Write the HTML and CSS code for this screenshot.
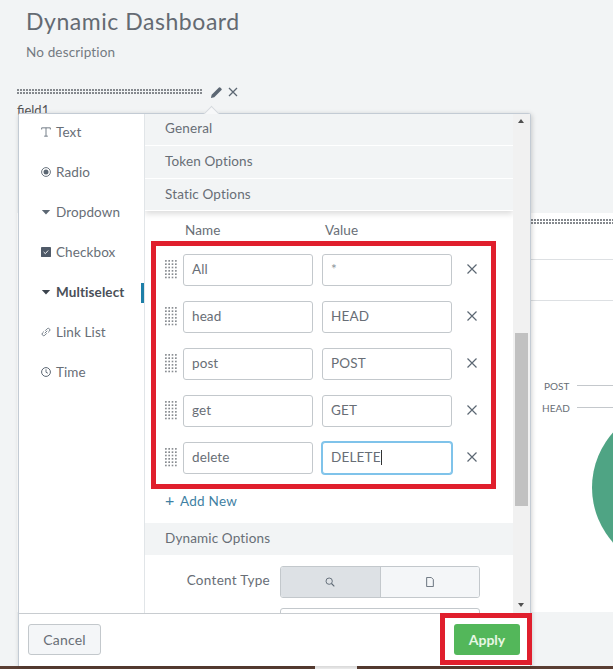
FILE: index.html
```html
<!DOCTYPE html>
<html lang="en">
<head>
<meta charset="utf-8">
<title>Dynamic Dashboard</title>
<link rel="stylesheet" href="styles.css">
</head>
<body>
<div class="page">
  <header class="head">
    <h1 class="title">Dynamic Dashboard</h1>
    <p class="desc">No description</p>
  </header>
  <div class="field-bar">
    <div class="dots dots-field"></div>
    <svg class="pencil" viewBox="0 0 14 14"><path d="M1 13l.8-3.600L9.600 1.600a1 1 0 0 1 1.400 0l1.400 1.400a1 1 0 0 1 0 1.400L4.600 12.200z" fill="#5c6773"/></svg>
    <svg class="field-x" viewBox="0 0 10 10"><path d="M1 1l8 8M9 1l-8 8" stroke="#5c6773" stroke-width="1.300" fill="none"/></svg>
  </div>
  <div class="field-label">field1</div>

  <section class="panel">
    <div class="dots dots-panel"></div>
    <div class="panel-line line-a"></div>
    <div class="panel-line line-b"></div>
    <span class="chart-label label-post">POST</span>
    <span class="chart-rule rule-post"></span>
    <span class="chart-label label-head">HEAD</span>
    <span class="chart-rule rule-head"></span>
    <div class="pie"></div>
  </section>
  <div class="taskbar"><span class="taskbar-tab"></span></div>

  <div class="popover">
    <span class="caret"></span>
    <div class="pop-body">
      <nav class="nav">
        <a class="nav-item"><svg class="ico" viewBox="0 0 12 12"><path d="M.8 3V1h10.400v2M6 1v10M3.800 11h4.400" stroke="#5c6773" stroke-width="1" fill="none"/></svg>Text</a>
        <a class="nav-item"><svg class="ico" viewBox="0 0 12 12"><circle cx="6" cy="6" r="5.300" stroke="#5c6773" stroke-width="1.100" fill="none"/><circle cx="6" cy="6" r="3" fill="#5c6773"/></svg>Radio</a>
        <a class="nav-item"><svg class="ico" viewBox="0 0 12 12"><path d="M1 3.500h10L6 9z" fill="#5c6773"/></svg>Dropdown</a>
        <a class="nav-item"><svg class="ico" viewBox="0 0 12 12"><rect x="0" y="0" width="12" height="12" rx="1" fill="#4f5a68"/><path d="M3.200 6l2 2 3.400-3.800" stroke="#fff" stroke-width="1.100" fill="none"/></svg>Checkbox</a>
        <a class="nav-item is-active"><svg class="ico" viewBox="0 0 12 12"><path d="M1 3.500h10L6 9z" fill="#3c444d"/></svg>Multiselect</a>
        <a class="nav-item"><svg class="ico" viewBox="0 0 12 12"><path d="M4.500 7.500l3-3M5 4.500L7.500 2a2 2 0 0 1 2.800 2.800L8.500 6.500M7 7.500L4.500 10a2 2 0 0 1-2.800-2.800L3.500 5.500" stroke="#5c6773" stroke-width="1" fill="none"/></svg>Link List</a>
        <a class="nav-item"><svg class="ico" viewBox="0 0 12 12"><circle cx="6" cy="6" r="5.300" stroke="#5c6773" stroke-width="1.200" fill="none"/><path d="M6 2.800v3.500l2.300 1.200" stroke="#5c6773" stroke-width="1.100" fill="none"/></svg>Time</a>
      </nav>
      <div class="main">
        <div class="accordion">
          <div class="acc-row">General</div>
          <div class="acc-row">Token Options</div>
          <div class="acc-row">Static Options</div>
        </div>
        <div class="col-heads"><span class="col-name">Name</span><span>Value</span></div>
        <div class="rows">
          <div class="row"><span class="grip"></span><div class="input name">All</div><div class="input val star">*</div><svg class="del" viewBox="0 0 10 10"><path d="M.500.500l9 9M9.500.500l-9 9" stroke="#5c6773" stroke-width="1.200" fill="none"/></svg></div>
          <div class="row"><span class="grip"></span><div class="input name">head</div><div class="input val">HEAD</div><svg class="del" viewBox="0 0 10 10"><path d="M.500.500l9 9M9.500.500l-9 9" stroke="#5c6773" stroke-width="1.200" fill="none"/></svg></div>
          <div class="row"><span class="grip"></span><div class="input name">post</div><div class="input val">POST</div><svg class="del" viewBox="0 0 10 10"><path d="M.500.500l9 9M9.500.500l-9 9" stroke="#5c6773" stroke-width="1.200" fill="none"/></svg></div>
          <div class="row"><span class="grip"></span><div class="input name">get</div><div class="input val">GET</div><svg class="del" viewBox="0 0 10 10"><path d="M.500.500l9 9M9.500.500l-9 9" stroke="#5c6773" stroke-width="1.200" fill="none"/></svg></div>
          <div class="row"><span class="grip"></span><div class="input name">delete</div><div class="input val is-focus">DELETE<span class="cursor"></span></div><svg class="del" viewBox="0 0 10 10"><path d="M.500.500l9 9M9.500.500l-9 9" stroke="#5c6773" stroke-width="1.200" fill="none"/></svg></div>
        </div>
        <a class="add-new"><span class="plus">+</span>Add New</a>
        <div class="acc-row dyn">Dynamic Options</div>
        <div class="ctype">
          <span class="ctype-label">Content Type</span>
          <div class="seg">
            <span class="seg-btn is-on"><svg class="seg-ico" viewBox="0 0 12 12"><circle cx="5" cy="5" r="3.800" stroke="#5c6773" stroke-width="1.100" fill="none"/><path d="M7.800 7.800l3.400 3.400" stroke="#5c6773" stroke-width="1.300"/></svg></span>
            <span class="seg-btn"><svg class="seg-ico" viewBox="0 0 12 12"><path d="M2 .5h5.500l2.500 2.500v8.500H2z" stroke="#5c6773" stroke-width="1.100" fill="none"/></svg></span>
          </div>
        </div>
        <div class="next-input"></div>
      </div>
      <div class="scroll">
        <span class="arrow-up"></span>
        <span class="thumb"></span>
        <span class="arrow-down"></span>
      </div>
    </div>
    <footer class="pop-foot">
      <button class="btn cancel">Cancel</button>
      <button class="btn apply">Apply</button>
    </footer>
  </div>

  <div class="mark mark-rows"></div>
  <div class="mark mark-apply"></div>
</div>
</body>
</html>
```
FILE: styles.css
```css
* { box-sizing: border-box; }
html, body { margin: 0; padding: 0; }
body { font-family: Lato, "Open Sans", sans-serif; color: #686e76; background: #f2f4f5; overflow: hidden; }
.page { position: relative; width: 613px; height: 669px; overflow: hidden; background: #f2f4f5; }

.head { padding: 7px 0 0 26px; height: 84px; }
.title { margin: 0; font-size: 23px; line-height: 28px; font-weight: 400; color: #646a72; letter-spacing: .55px; }
.desc { margin: 9px 0 0; font-size: 13.500px; line-height: 16px; color: #747a82; letter-spacing: .15px; }

.field-bar { display: flex; align-items: center; height: 16px; padding-left: 17px; }
.dots { height: 6px; background-image: radial-gradient(circle at 1px 1px, #85898e .85px, transparent 1px); background-size: 3px 3px; }
.dots-field { width: 186px; }
.pencil { width: 13px; height: 13px; margin-left: 7px; }
.field-x { width: 10px; height: 10px; margin-left: 5px; }
.field-label { padding-left: 17px; font-size: 13px; line-height: 14px; color: #555; height: 110px; margin-top: 3px; }

.panel { position: relative; height: 399px; margin-left: 17px; background: #fff; }
.dots-panel { position: absolute; left: 514px; right: 0; top: 6px; }
.panel-line { position: absolute; left: 514px; right: 0; height: 1px; background: #dde0e3; }
.line-a { top: 46px; }
.line-b { top: 87px; }
.chart-label { position: absolute; font-size: 10px; line-height: 12px; color: #686e76; }
.label-post { left: 527px; top: 167px; }
.label-head { left: 525px; top: 189px; }
.chart-rule { position: absolute; left: 560px; right: 0; height: 1px; background: #c4c8cc; }
.rule-post { top: 172px; }
.rule-head { top: 194px; }
.pie { position: absolute; left: 575px; top: 192px; width: 165px; height: 165px; border-radius: 50%; background: #4fa484; }

.taskbar { position: absolute; left: 0; right: 0; bottom: 0; height: 3px; background: #5a3e33; }
.taskbar-tab { display: block; width: 42px; height: 3px; margin-left: 315px; background: #f4f4f4; }

.popover { position: absolute; left: 18px; top: 113px; width: 513px; height: 553px; background: #fff; border: 1px solid #c3cbd4; border-bottom: 0; border-radius: 3px 3px 0 0; box-shadow: 1px 1px 5px rgba(0,0,0,.18); display: flex; flex-direction: column; }
.caret { position: absolute; left: 187px; top: -6px; width: 11px; height: 11px; background: #f7f8f9; transform: rotate(45deg); border-left: 1px solid #d5dade; border-top: 1px solid #d5dade; }
.pop-body { display: flex; height: 499px; position: relative; overflow: hidden; }
.nav { width: 126px; flex: none; border-right: 1px solid #e1e5e8; background: #fff; }
.nav-item { display: flex; align-items: center; height: 40px; padding: 0 0 4px 22px; font-size: 13.500px; color: #686e76; letter-spacing: .1px; }
.nav-item.is-active { font-weight: 700; color: #4a5058; position: relative; }
.nav-item.is-active::after { content: ""; position: absolute; right: 0; top: 9px; width: 3px; height: 20px; background: #1e7fa8; }
.ico { width: 10px; height: 10px; margin-right: 5px; flex: none; }

.main { width: 368px; flex: none; overflow: hidden; background: #fff; }
.accordion { background: #f2f4f5; box-shadow: 0 3px 6px rgba(0,0,0,.14); position: relative; }
.acc-row { height: 32.33px; padding-left: 20px; line-height: 28px; font-size: 13.500px; color: #686e76; background: #f2f4f5; border-bottom: 1px solid #fff; letter-spacing: .15px; }
.acc-row + .acc-row { line-height: 30px; }
.col-heads { display: flex; height: 43px; padding: 11px 0 0 40px; font-size: 13.500px; line-height: 16px; color: #686e76; letter-spacing: .1px; }
.col-name { width: 140px; }
.rows { display: flex; flex-direction: column; gap: 15px; }
.row { display: flex; align-items: center; height: 32px; padding-left: 20px; }
.grip { width: 12px; height: 20px; margin-right: 6px; background-image: radial-gradient(circle at 1px 1px, #85898e .8px, transparent 1px); background-size: 3.330px 3.330px; }
.input { height: 32px; width: 130px; border: 1px solid #c3c8cc; border-radius: 3px; padding-left: 8px; font-size: 13.500px; line-height: 29px; color: #686e76; background: #fff; letter-spacing: .1px; }
.val { margin-left: 9px; letter-spacing: .2px; }
.star { color: #8a929a; }
.is-focus { box-shadow: 0 0 0 1px #7fc3ea; border-color: #7fc3ea; }
.cursor { display: inline-block; width: 1px; height: 15px; background: #333; vertical-align: -3px; }
.del { width: 10px; height: 10px; margin: 0 0 2px 15px; }
.add-new { display: block; height: 49px; padding: 18px 0 0 20px; font-size: 13.500px; line-height: 16px; color: #3f7fa3; letter-spacing: .25px; }
.plus { font-size: 16px; margin-right: 5.500px; }
.dyn { height: 32px; line-height: 30px; border: 0; }
.ctype { display: flex; align-items: center; height: 32px; margin-top: 11px; }
.ctype-label { width: 125px; padding-bottom: 3px; text-align: right; font-size: 13.500px; color: #686e76; letter-spacing: .3px; }
.seg { display: flex; margin-left: 10px; width: 200px; height: 32px; border: 1px solid #c3c8cc; border-radius: 3px; overflow: hidden; }
.seg-btn { flex: 1; display: flex; align-items: center; justify-content: center; background: #f4f6f8; }
.seg-btn.is-on { background: #dde1e5; border-right: 1px solid #c3c8cc; }
.seg-ico { width: 10px; height: 10px; }
.next-input { margin: 10px 0 0 135px; width: 200px; height: 32px; border: 1px solid #c3c8cc; border-radius: 3px; }

.scroll { width: 18px; flex: none; background: #f1f1f1; position: relative; }
.thumb { position: absolute; left: 2px; top: 219px; width: 13px; height: 173px; background: #c1c1c1; }
.arrow-up, .arrow-down { position: absolute; left: 5px; border-left: 3.500px solid transparent; border-right: 3.500px solid transparent; }
.arrow-up { top: 5px; border-bottom: 4px solid #505050; }
.arrow-down { bottom: 6px; border-top: 4px solid #505050; }

.pop-foot { display: flex; justify-content: space-between; align-items: flex-start; padding: 10px 10px 0 9px; flex: 1; border-top: 1px solid #c8ccd0; }
.btn { height: 31px; border-radius: 3px; font-family: inherit; font-size: 14px; }
.cancel { width: 73px; background: #f4f6f8; border: 1px solid #c3c8cc; color: #686e76; letter-spacing: .2px; }
.apply { width: 66px; background: #53b75a; border: 0; color: #e8f7e4; font-weight: 700; }

.mark { position: absolute; border: 5px solid #e01f2d; }
.mark-rows { left: 151px; top: 241px; width: 345px; height: 248px; }
.mark-apply { left: 440px; top: 613px; width: 92px; height: 52px; }
```
